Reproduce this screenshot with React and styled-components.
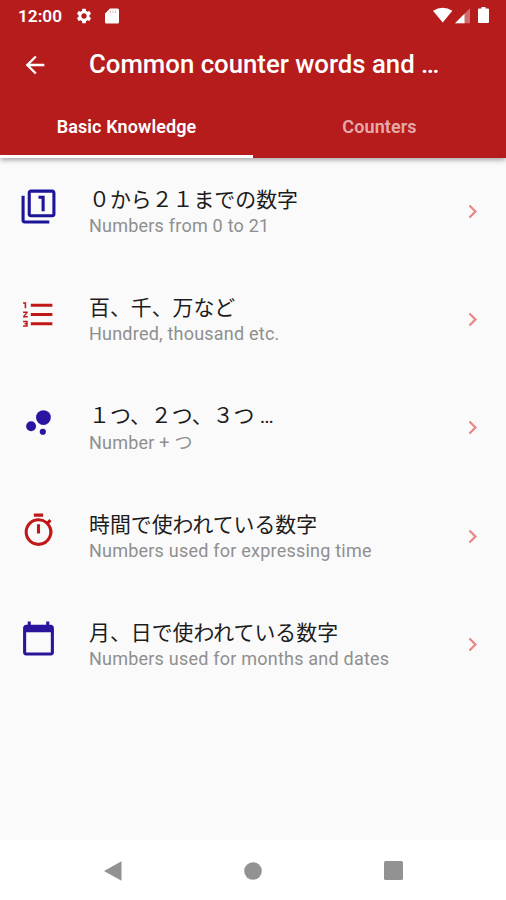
import React, { useState } from 'react';
import styled, { createGlobalStyle } from 'styled-components';
import {
  MdArrowBack,
  MdBubbleChart,
  MdCalendarToday,
  MdChevronRight,
  MdFilter1,
  MdFormatListNumbered,
  MdOutlineTimer,
  MdSettings,
} from 'react-icons/md';

const GlobalStyle = createGlobalStyle`
  * {
    box-sizing: border-box;
  }

  body {
    margin: 0;
    background-color: #fafafa;
    font-family: Roboto, 'Noto Sans CJK JP', sans-serif;
  }
`;

const Screen = styled.div`
  width: 506px;
  height: 900px;
  display: flex;
  flex-direction: column;
  overflow: hidden;
  background-color: #fafafa;
`;

const Header = styled.header`
  flex: none;
  height: 158px;
  display: flex;
  flex-direction: column;
  background-color: #b71c1c;
  color: white;
  box-shadow: 0 2px 5px rgba(0, 0, 0, 0.35);
`;

const StatusBar = styled.div`
  height: 32px;
  padding: 0 16px 0 18px;
  display: flex;
  align-items: center;
  justify-content: space-between;
`;

const StatusGroup = styled.div`
  display: flex;
  align-items: center;

  svg {
    display: block;
  }
`;

const Clock = styled.span`
  width: 57px;
  font-size: 17.2px;
  font-weight: 600;
  line-height: 32px;
`;

const CardIcon = styled.svg`
  margin-left: 12px;
`;

const Toolbar = styled.div`
  height: 65px;
  padding: 0 21px;
  display: flex;
  align-items: center;
`;

const IconButton = styled.button`
  width: 68px;
  padding: 0;
  border: none;
  background: none;
  color: white;
  font-size: 28px;
  line-height: 0;
  text-align: left;
  cursor: pointer;
`;

const Title = styled.h1`
  margin: 0;
  padding-bottom: 2px;
  font-size: 25.75px;
  font-weight: 500;
  line-height: 32px;
  white-space: nowrap;
`;

const Tabs = styled.div`
  flex: 1;
  display: flex;
`;

const Tab = styled.button`
  flex: 1;
  padding: 1px 0 0;
  border: none;
  border-bottom: 3px solid ${({ $active }) => ($active ? 'white' : 'transparent')};
  background: none;
  color: ${({ $active }) => ($active ? 'white' : 'rgba(255, 255, 255, 0.65)')};
  font-family: inherit;
  font-size: 18px;
  font-weight: 600;
  letter-spacing: 0.1px;
  cursor: pointer;
`;

const List = styled.main`
  flex: 1;
`;

const Row = styled.div`
  height: 108.2px;
  padding: 0 20px;
  display: flex;
  align-items: center;
  cursor: pointer;
`;

const RowIcon = styled.div`
  width: 69px;
  height: 49px;
  color: ${({ $color }) => $color};
  font-size: 37px;

  svg {
    display: block;
  }
`;

const RowText = styled.div`
  flex: 1;
`;

const RowTitle = styled.div`
  padding-top: ${({ $tall }) => ($tall ? 0 : 1)}px;
  font-size: 20.9px;
  line-height: ${({ $tall }) => ($tall ? 29 : 27)}px;
  color: #1c1c1c;
  white-space: nowrap;
`;

const RowSubtitle = styled.div`
  font-size: 18px;
  line-height: 24px;
  letter-spacing: 0.22px;
  color: #8f8f8f;
  white-space: nowrap;
`;

const Chevron = styled(MdChevronRight)`
  margin-bottom: 1px;
  color: #ec8585;
  font-size: 27px;
`;

const NavBar = styled.nav`
  flex: none;
  height: 60px;
  padding-top: 1px;
  display: flex;
  align-items: center;
  justify-content: center;
  gap: 122px;
  background-color: white;
  color: #929292;
`;

const rows = [
  { icon: MdFilter1, color: '#1c1599', title: '０から２１までの数字', subtitle: 'Numbers from 0 to 21' },
  { icon: MdFormatListNumbered, color: '#c01818', title: '百、千、万など', subtitle: 'Hundred, thousand etc.' },
  { icon: MdBubbleChart, color: '#2a14a0', title: '１つ、２つ、３つ …', subtitle: 'Number + つ', tall: true },
  { icon: MdOutlineTimer, color: '#c01818', title: '時間で使われている数字', subtitle: 'Numbers used for expressing time' },
  { icon: MdCalendarToday, color: '#2a149c', title: '月、日で使われている数字', subtitle: 'Numbers used for months and dates' },
];

const tabs = ['Basic Knowledge', 'Counters'];

const App = () => {
  const [activeTab, setActiveTab] = useState(0);

  return (
    <>
      <GlobalStyle />
      <Screen>
        <Header>
          <StatusBar>
            <StatusGroup>
              <Clock>12:00</Clock>
              <MdSettings size={18} />
              <CardIcon width="14" height="16" viewBox="0 0 14 16">
                <path d="M5 .5h7.5A1.5 1.5 0 0 1 14 2v12a1.5 1.5 0 0 1-1.5 1.5h-11A1.5 1.5 0 0 1 0 14V5.5z" fill="white" />
                <path d="M5.5 2.5v2.5M8 2.5v2.5M10.5 2.5v2.5" stroke="#e8b4b4" strokeWidth="1" />
              </CardIcon>
            </StatusGroup>
            <StatusGroup>
              <svg width="57" height="18" viewBox="0 0 57 18" fill="white">
                <path d="M0 3.8Q9.7-2.5 19.4 3.8L9.7 15.5z" />
                <path d="M22 16.2 37 1.2v15z" fill="rgba(255,255,255,.35)" />
                <path d="M22 16.2 31.5 6.7v9.5z" />
                <path d="M48.5 0h4v1.5H55q1 0 1 1V15q0 1-1 1h-9q-1 0-1-1V2.5q0-1 1-1h2.5z" />
              </svg>
            </StatusGroup>
          </StatusBar>
          <Toolbar>
            <IconButton aria-label="Back">
              <MdArrowBack />
            </IconButton>
            <Title>Common counter words and …</Title>
          </Toolbar>
          <Tabs>
            {tabs.map((tab, index) => (
              <Tab key={tab} $active={index === activeTab} onClick={() => setActiveTab(index)}>
                {tab}
              </Tab>
            ))}
          </Tabs>
        </Header>

        <List>
          {rows.map(({ icon: Icon, color, title, subtitle, tall }) => (
            <Row key={title}>
              <RowIcon $color={color}>
                <Icon />
              </RowIcon>
              <RowText>
                <RowTitle $tall={tall}>{title}</RowTitle>
                <RowSubtitle>{subtitle}</RowSubtitle>
              </RowText>
              <Chevron />
            </Row>
          ))}
        </List>

        <NavBar>
          <svg width="18" height="20" viewBox="0 0 18 20" fill="currentColor">
            <path d="M0 10 17.5.2v19.6z" />
          </svg>
          <svg width="18" height="18" viewBox="0 0 18 18" fill="currentColor">
            <circle cx="9" cy="9" r="8.8" />
          </svg>
          <svg width="19" height="19" viewBox="0 0 19 19" fill="currentColor">
            <rect width="19" height="19" rx="1.5" />
          </svg>
        </NavBar>
      </Screen>
    </>
  );
};

export default App;
